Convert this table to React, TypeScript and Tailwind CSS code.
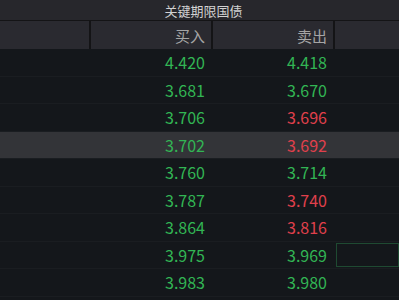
const rows: { buy: string; sell: string; sellUp: boolean }[] = [
  { buy: '4.420', sell: '4.418', sellUp: true },
  { buy: '3.681', sell: '3.670', sellUp: true },
  { buy: '3.706', sell: '3.696', sellUp: false },
  { buy: '3.702', sell: '3.692', sellUp: false },
  { buy: '3.760', sell: '3.714', sellUp: true },
  { buy: '3.787', sell: '3.740', sellUp: false },
  { buy: '3.864', sell: '3.816', sellUp: false },
  { buy: '3.975', sell: '3.969', sellUp: true },
  { buy: '3.983', sell: '3.980', sellUp: true },
];

const font = 'font-["Microsoft_YaHei","Noto_Sans_CJK_SC",sans-serif]';

export default function App() {
  return (
    <div className={`w-[399px] h-[300px] overflow-hidden bg-[#14171b] ${font}`}>
      <div className="h-[21px] bg-[#27272c] flex items-center justify-center pl-[8px] border-b border-[#141416] text-[13px] text-[#d2d2d2] leading-none">
        关键期限国债
      </div>
      <div className="h-[28px] bg-[#2a2a30] flex text-[15px] text-[#a5a5a5] leading-none">
        <div className="w-[91px] border-r-2 border-[#141416]" />
        <div className="w-[122px] border-r-2 border-[#141416] flex items-center justify-end pr-[6px]">买入</div>
        <div className="w-[122px] border-r-2 border-[#141416] flex items-center justify-end pr-[6px]">卖出</div>
        <div className="flex-1" />
      </div>
      <div className="flex flex-col">
        {rows.map((r, i) => (
          <div
            key={i}
            className={`h-[27.5px] flex items-center text-[16px] leading-none border-b border-[#1a1d21] ${
              i === 3 ? 'bg-[#333438]' : ''
            }`}
          >
            <div className="w-[91px]" />
            <div className="w-[122px] text-right pr-[8px] text-[#32b554]">{r.buy}</div>
            <div className={`w-[122px] text-right pr-[8px] ${r.sellUp ? 'text-[#32b554]' : 'text-[#e0404c]'}`}>
              {r.sell}
            </div>
            <div className="flex-1 h-full pl-[1px] py-[1px]">
              {i === 7 && <div className="h-full border border-[#1f4a32]" />}
            </div>
          </div>
        ))}
      </div>
    </div>
  );
}
